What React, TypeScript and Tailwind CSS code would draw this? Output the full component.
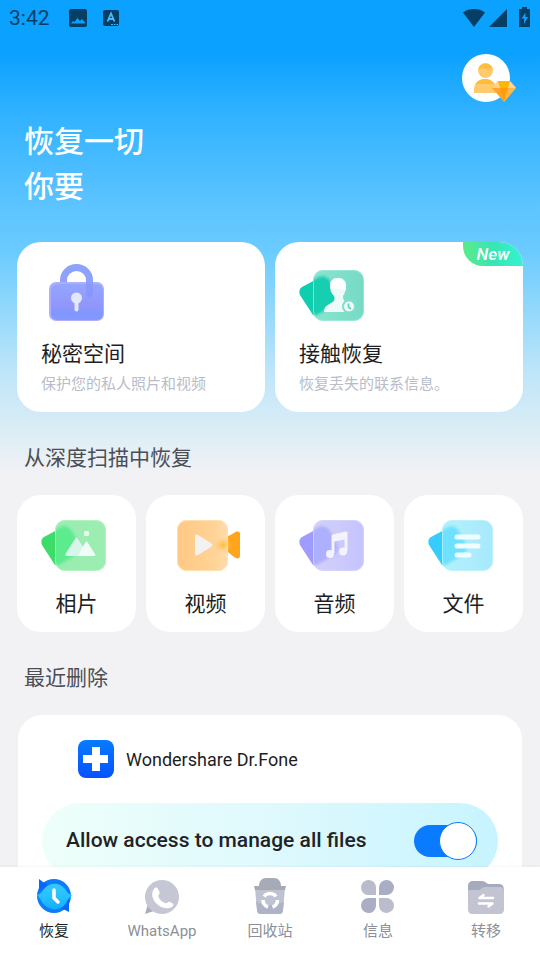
import type { ReactNode } from "react";

type IconProps = { id: string };

function StatusBar() {
  return (
    <div className="flex h-9 items-center justify-between pr-2 pl-[9px] text-[#063f66]">
      <div className="flex items-center">
        <span className="w-[60px] text-[21px] leading-9">3:42</span>
        <svg width="18" height="18" viewBox="0 0 18 18" fill="currentColor">
          <path
            fillRule="evenodd"
            d="M2 0h14a2 2 0 0 1 2 2v14a2 2 0 0 1-2 2H2a2 2 0 0 1-2-2V2a2 2 0 0 1 2-2Zm0 14.500h14v-1l-3-3.500-2 2-2.500-3-3 4-1.500-1Z"
          />
        </svg>
        <svg className="ml-4" width="16" height="16" viewBox="0 0 16 16">
          <rect width="16" height="16" rx="2" fill="currentColor" />
          <path
            d="M4.500 11.500 8 3.500l3.500 8M5.800 9h4.400"
            stroke="#4db8f8"
            strokeWidth="1.800"
            fill="none"
          />
          <path d="M8 14.500h2m1 0h1.500m1 0h1.500" stroke="#4db8f8" />
        </svg>
      </div>
      <svg width="69" height="22" viewBox="0 0 69 22" fill="currentColor">
        <path d="M0 5.500C3 3 7 2 11 2s8 1 11 3.500L11 20Z" />
        <path d="M26 20 44 2v18Z" />
        <path
          fillRule="evenodd"
          d="M56 2h3V0h5v2h3v18H56Zm6.500 3.500-4 6h2.500v5.500l4-7h-2.500Z"
        />
      </svg>
    </div>
  );
}

function AccountIcon() {
  return (
    <svg width="54" height="50" viewBox="0 0 54 50">
      <circle cx="24" cy="24" r="24" fill="#fff" />
      <circle cx="23.500" cy="16.500" r="7.500" fill="#ffca6b" />
      <path d="M16.500 14.500a7.500 7.500 0 0 1 14 0Z" fill="#ffbd3b" />
      <path d="M12 39v-4c0-6 5-10 11-10s11 4 11 10v4Z" fill="#ffca6b" />
      <path d="M13.500 30c2-3.500 5.500-5 9.500-5s7.500 1.500 9.500 5Z" fill="#ffbd3b" />
      <path d="m30 34 6-7h12l6 7-12 14Z" fill="#ffa52b" />
      <path d="M36 27h12l-2 7h-8Z" fill="#ffb800" />
      <path d="m30 34 6-7 2 7Z" fill="#ffd48a" />
      <path d="m54 34-6-7-2 7Z" fill="#ffd9a0" />
      <path d="M38 34h8l-4 14Z" fill="#ff9d0a" />
      <path d="m46 34 8 0-12 14Z" fill="#ffb846" />
    </svg>
  );
}

function LockIcon({ id }: IconProps) {
  return (
    <svg width="72" height="60" viewBox="0 0 72 60">
      <defs>
        <linearGradient id={id} x1="0" y1="0" x2="0" y2="1">
          <stop offset="0" stopColor="#94a6ff" />
          <stop offset="0.600" stopColor="#9196fc" />
          <stop offset="0.850" stopColor="#7f97ff" />
          <stop offset="1" stopColor="#8498ff" />
        </linearGradient>
      </defs>
      <path
        d="M22.500 24v-6a13 12.500 0 0 1 26 0V24"
        stroke="#8ca2fb"
        strokeWidth="7"
        fill="none"
      />
      <rect x="8" y="20" width="55" height="39" rx="7" fill="#b0adfb" />
      <rect x="10" y="22" width="52" height="36" rx="6" fill={`url(#${id})`} />
      <path d="M45 20h7v10a3.500 5 0 0 1-7 0Z" fill="#838ffa" opacity="0.600" />
      <circle cx="35.500" cy="36" r="5.500" fill="#e3e8fc" />
      <rect x="33.500" y="37" width="4" height="12.500" rx="2" fill="#e3e8fc" />
    </svg>
  );
}

type GlassIconProps = IconProps & {
  back: string;
  lobe: string;
  from: string;
  to: string;
  edge: string;
  children: ReactNode;
};

// tilted sheet with a frosted square over it
function GlassIcon({ id, back, lobe, from, to, edge, children }: GlassIconProps) {
  return (
    <svg width="72" height="60" viewBox="0 0 72 60">
      <defs>
        <linearGradient id={id}>
          <stop offset="0" stopColor={from} />
          <stop offset="1" stopColor={to} />
        </linearGradient>
        <clipPath id={`${id}-clip`}>
          <rect x="14" y="8" width="51" height="51" rx="10" />
        </clipPath>
        <filter id={`${id}-blur`}>
          <feGaussianBlur stdDeviation="1.500" />
        </filter>
      </defs>
      <path
        d="M3 25 16 18v36c-2-1-3-2-4-4L1 33c-1-3-1-6 2-8Z"
        fill={back}
      />
      <rect x="14" y="8" width="51" height="51" rx="10" fill={`url(#${id})`} />
      <g clipPath={`url(#${id}-clip)`}>
        <path
          d="M10 20 18 16c5-3 10-2 13 3l6 11c3 6 2 10-4 14l-15 9-8 1Z"
          fill={lobe}
          filter={`url(#${id}-blur)`}
        />
      </g>
      <rect
        x="14.500"
        y="8.500"
        width="50"
        height="50"
        rx="9.500"
        fill="none"
        stroke={edge}
        opacity="0.700"
      />
      {children}
    </svg>
  );
}

function ContactIcon() {
  return (
    <GlassIcon
      id="contact"
      back="#0fcdaf"
      lobe="#15ceb0"
      from="#8be5cf"
      to="#75dac5"
      edge="#a5ebdd"
    >
      <path
        d="M39 16c5 0 8 3 8 8 0 4-1 7-3 10 0 4 1 5 4 7 2 1 4 3 5 9H25c0-6 4-7 7-9 4-2 4-4 3-7-3-3-4-6-4-10 0-5 3-8 8-8Z"
        fill="#eefaf9"
      />
      <path d="M39 16c5 0 8 3 8 8v4l-16-2v-2c0-5 3-8 8-8Z" fill="#fff" />
      <circle cx="50" cy="44.500" r="7" fill="#82dec9" />
      <circle cx="50" cy="44.500" r="5" fill="#edfcf8" />
      <path d="M49.500 41.500v3.500l2.500 2" stroke="#62d5bd" strokeWidth="1.800" fill="none" />
    </GlassIcon>
  );
}

function PhotoIcon() {
  return (
    <GlassIcon
      id="photo"
      back="#3bdc68"
      lobe="#5bec8e"
      from="#9cecb2"
      to="#9bedb0"
      edge="#bdf3cb"
    >
      <path
        d="m25 41 9-14c1-2 2-2 3 0l9 14c1 2 0 3-1 3H26c-2 0-2-1-1-3Z"
        fill="#d9f5ea"
      />
      <path
        d="m38 42 6-11c1-2 2-2 3 0l7 11c1 1 0 2-1 2H39c-1 0-2-1-1-2Z"
        fill="#f0fcf6"
      />
      <rect x="43" y="19" width="5" height="5" rx="1" fill="#e4faec" />
    </GlassIcon>
  );
}

function VideoIcon() {
  return (
    <svg width="72" height="60" viewBox="0 0 72 60">
      <defs>
        <linearGradient id="video">
          <stop offset="0" stopColor="#ffc983" />
          <stop offset="0.700" stopColor="#ffd296" />
          <stop offset="1" stopColor="#ffdcab" />
        </linearGradient>
        <radialGradient id="video-glow">
          <stop offset="0" stopColor="#ffbd35" />
          <stop offset="1" stopColor="#ffca77" stopOpacity="0" />
        </radialGradient>
      </defs>
      <path d="m53 27 11-6c3-2 6-2 6 1v22c0 3-3 3-6 1l-11-9Z" fill="#ffa51b" />
      <rect x="7" y="8" width="51" height="51" rx="10" fill="url(#video)" />
      <ellipse cx="53" cy="33" rx="9" ry="8" fill="url(#video-glow)" />
      <rect
        x="7.500"
        y="8.500"
        width="50"
        height="50"
        rx="9.500"
        fill="none"
        stroke="#ffdfb0"
      />
      <path
        d="M25 25c0-3 1-3 3-2l13 8c2 1 2 3 0 4l-13 8c-2 1-3 1-3-2Z"
        fill="#f3f2f0"
      />
    </svg>
  );
}

function AudioIcon() {
  return (
    <GlassIcon
      id="audio"
      back="#9f9bff"
      lobe="#adafff"
      from="#d2d2f8"
      to="#c5c3ff"
      edge="#d9d6fa"
    >
      <path
        d="M34 41V24l13-3v18"
        stroke="#f3f2fd"
        strokeWidth="3"
        strokeLinejoin="round"
        fill="none"
      />
      <path d="M33 23.500 48 20v7l-15 3Z" fill="#f3f2fd" />
      <circle cx="31" cy="42" r="4" fill="#f3f2fd" />
      <circle cx="44" cy="39.500" r="4" fill="#f3f2fd" />
    </GlassIcon>
  );
}

function FileIcon() {
  return (
    <GlassIcon
      id="file"
      back="#35cdff"
      lobe="#70e0ff"
      from="#b3f2fa"
      to="#a8e8fe"
      edge="#c3f3fb"
    >
      <path
        d="M29 25h21M29 34h21M29 43h12"
        stroke="#effdfd"
        strokeWidth="5"
        strokeLinecap="round"
      />
    </GlassIcon>
  );
}

function RestoreNavIcon() {
  return (
    <svg width="38" height="38" viewBox="0 0 38 38">
      <defs>
        <linearGradient id="restore" x1="0" y1="0" x2="0" y2="1">
          <stop offset="0" stopColor="#38c5ff" />
          <stop offset="0.500" stopColor="#24c2ff" />
          <stop offset="1" stopColor="#13acfc" />
        </linearGradient>
      </defs>
      <circle cx="19" cy="18" r="17" fill="#0a7cfc" />
      <path d="m4 1 4 3 8 4L4 13Z" fill="#0767ff" />
      <path d="m34 34-4-2-8-3 12-8Z" fill="#0767ff" />
      <path
        d="M2 17c4-1 5-4 7-6 5-7 16-7 21 0 2 3 3 5 7 6-1 2-4 3-5 6-3 8-13 11-20 6-5-3-6-8-10-12Z"
        fill="url(#restore)"
      />
      <path
        d="M19 12v8l4 4"
        stroke="#fff"
        strokeWidth="3.500"
        strokeLinecap="round"
        strokeLinejoin="round"
        fill="none"
      />
    </svg>
  );
}

function WhatsAppNavIcon() {
  return (
    <svg width="38" height="38" viewBox="0 0 38 38">
      <path d="m5 26-3 10 9-3Z" fill="#a9adbc" />
      <circle cx="19" cy="19" r="17" fill="#c5c7d4" />
      <path
        d="M11 11c1-2 3-2 4 0l1.500 3c1 2-2 3-1 5 1.500 3 3.500 5 6.500 6 2 1 3-2 5-1l2 1c2 1 2 3 0 4-6 3-13 0-17-5-3-4-4-9-1-13Z"
        fill="#fff"
      />
    </svg>
  );
}

function TrashNavIcon() {
  return (
    <svg width="38" height="38" viewBox="0 0 38 38">
      <path d="M8 8c0-5 3-8 7-8h8c4 0 7 3 7 8Z" fill="#a6abba" />
      <path d="M4 10h30l-2 22c0 3-2 4-4 4H10c-2 0-4-1-4-4Z" fill="#bfc2d0" />
      <path d="M5 23c8 7 18 4 28 1l-1 8c0 3-2 4-4 4H10c-2 0-4-1-4-4Z" fill="#aeb3c8" />
      <path d="M3 8h32l-1 4H4Z" fill="#aaa9b2" />
      <path
        d="M13 18.500c3-4 9-4 12 0M26.500 22c0 3-2 6-5 7M17 29c-3-1-5-4-5-7"
        stroke="#fff"
        strokeWidth="3.500"
        fill="none"
      />
    </svg>
  );
}

function MessageNavIcon() {
  return (
    <svg width="38" height="38" viewBox="0 0 38 38">
      <path d="M17 17h-7a7.500 7.500 0 1 1 7-8Z" fill="#b8bccb" />
      <path d="M20 17V9a7.500 7.500 0 1 1 8 8Z" fill="#aaaec5" />
      <path d="M17 20v8a7.500 7.500 0 1 1-7-8Z" fill="#aaaec5" />
      <path d="M20 20h8a7.500 7.500 0 1 1-8 8Z" fill="#bbbdcd" />
    </svg>
  );
}

function TransferNavIcon() {
  return (
    <svg width="38" height="38" viewBox="0 0 38 38">
      <path
        d="M1 20V8c0-3 2-5 5-5h9c4 0 4 3 7 3h10c3 0 5 2 5 6v8Z"
        fill="#a5aabd"
      />
      <path
        d="M1 12h10c3 0 4-3 7-3h15c3 0 4 2 4 4v19c0 2-2 4-4 4H5c-2 0-4-2-4-4Z"
        fill="#c2c4d1"
      />
      <path
        d="M26 20H12.500l4-3M12 25.500h13.500l-4 3"
        stroke="#fff"
        strokeWidth="2.500"
        strokeLinecap="round"
        strokeLinejoin="round"
        fill="none"
      />
    </svg>
  );
}

const scanItems = [
  { label: "相片", icon: <PhotoIcon /> },
  { label: "视频", icon: <VideoIcon /> },
  { label: "音频", icon: <AudioIcon /> },
  { label: "文件", icon: <FileIcon /> },
];

const navItems = [
  { label: "恢复", icon: <RestoreNavIcon />, active: true },
  { label: "WhatsApp", icon: <WhatsAppNavIcon /> },
  { label: "回收站", icon: <TrashNavIcon /> },
  { label: "信息", icon: <MessageNavIcon /> },
  { label: "转移", icon: <TransferNavIcon /> },
];

type FeatureCardProps = {
  icon: ReactNode;
  title: string;
  subTitle: string;
  badge?: string;
};

function FeatureCard({ icon, title, subTitle, badge }: FeatureCardProps) {
  return (
    <button
      type="button"
      className="relative overflow-hidden rounded-3xl bg-white px-6 pt-5 pb-[14px] text-left"
    >
      {icon}
      <div className="mt-4 text-[21px] leading-8 text-[#1c1e24]">{title}</div>
      <div className="text-[15px] leading-7 text-[#b8bccb]">{subTitle}</div>
      {badge && (
        <span className="absolute top-0 right-0 h-6 w-[60px] rounded-bl-[20px] bg-linear-to-r from-[#5aeb87] via-[#38e5b3] to-[#35f3d3] text-center text-[17px] leading-6 font-medium text-white italic">
          {badge}
        </span>
      )}
    </button>
  );
}

function SectionTitle({ children }: { children: ReactNode }) {
  return (
    <h2 className="mt-[30px] mb-[21px] px-[7px] text-[21px] leading-8 text-[#4b4e54]">
      {children}
    </h2>
  );
}

export default function App() {
  return (
    <div className="flex h-screen flex-col bg-[#f2f2f5] font-[Roboto,'Noto_Sans_CJK_SC',sans-serif]">
      <main className="min-h-0 flex-1 overflow-y-auto bg-[linear-gradient(180deg,#0aa1ff_0px,#0aa1ff_52px,#2fb1ff_110px,#5cc4ff_205px,#6acbff_250px,#92d8fb_310px,#bde5f9_370px,#dbedf6_430px,#f2f2f5_474px)] [scrollbar-width:none]">
        <StatusBar />
        <header className="pt-[18px]">
          <div className="flex justify-end pr-6">
            <button type="button" aria-label="账户">
              <AccountIcon />
            </button>
          </div>
          <h1 className="mt-[15px] px-6 text-[30px] leading-[45px] font-medium text-white">
            恢复一切
            <br />
            你要
          </h1>
        </header>
        <div className="px-[17px] pt-[33px]">
          <div className="grid grid-cols-2 gap-[10px]">
            <FeatureCard
              icon={<LockIcon id="lock" />}
              title="秘密空间"
              subTitle="保护您的私人照片和视频"
            />
            <FeatureCard
              icon={<ContactIcon />}
              title="接触恢复"
              subTitle="恢复丢失的联系信息。"
              badge="New"
            />
          </div>

          <SectionTitle>从深度扫描中恢复</SectionTitle>
          <div className="grid grid-cols-4 gap-[10px]">
            {scanItems.map((item) => (
              <button
                key={item.label}
                type="button"
                className="rounded-3xl bg-white pt-[17px] pb-3"
              >
                <div className="pl-6">{item.icon}</div>
                <div className="mt-4 text-[21px] leading-8 text-[#1c1e24]">
                  {item.label}
                </div>
              </button>
            ))}
          </div>

          <SectionTitle>最近删除</SectionTitle>
          <section className="mx-px rounded-3xl bg-white px-6 pt-[25px] pb-6">
            <div className="flex items-center gap-3 pl-9">
              <svg width="36" height="38" viewBox="0 0 36 38">
                <defs>
                  <linearGradient id="brand" x1="0" y1="0" x2="0" y2="1">
                    <stop offset="0" stopColor="#067cff" />
                    <stop offset="1" stopColor="#0751ff" />
                  </linearGradient>
                </defs>
                <rect width="36" height="38" rx="8" fill="url(#brand)" />
                <path d="M14 7h8v8h8v8h-8v8h-8v-8H5v-8h9Z" fill="#fff" />
              </svg>
              <span className="text-[18px] text-[#1c1e24]">
                Wondershare Dr.Fone
              </span>
            </div>
            <div className="mt-[25px] flex h-[76px] items-center justify-between rounded-full bg-linear-to-r from-[#eefffa] via-[#dff9fd] to-[#c7f4ff] pr-[21px] pl-6">
              <label
                htmlFor="manage-files"
                className="text-[21px] font-medium text-[#1f2328]"
              >
                Allow access to manage all files
              </label>
              <input
                id="manage-files"
                type="checkbox"
                role="switch"
                defaultChecked
                className="relative h-8 w-[63px] shrink-0 appearance-none rounded-full bg-gray-300 before:absolute before:-top-[3px] before:left-0 before:size-[38px] before:rounded-full before:border before:border-[#0a7bff] before:bg-white checked:bg-[#0a7bff] checked:before:right-0 checked:before:left-auto"
              />
            </div>
          </section>
        </div>
      </main>
      <nav className="relative grid h-[93px] shrink-0 grid-cols-5 bg-white shadow-[0_-1px_2px_rgba(0,0,0,0.04)]">
        {navItems.map((item) => (
          <a
            key={item.label}
            href="#"
            className={`flex flex-col items-center pt-[11px] text-[15px] leading-7 ${
              item.active ? "text-[#1c1e24]" : "text-[#8b8f99]"
            }`}
          >
            {item.icon}
            <span className="pt-px">{item.label}</span>
          </a>
        ))}
      </nav>
    </div>
  );
}
